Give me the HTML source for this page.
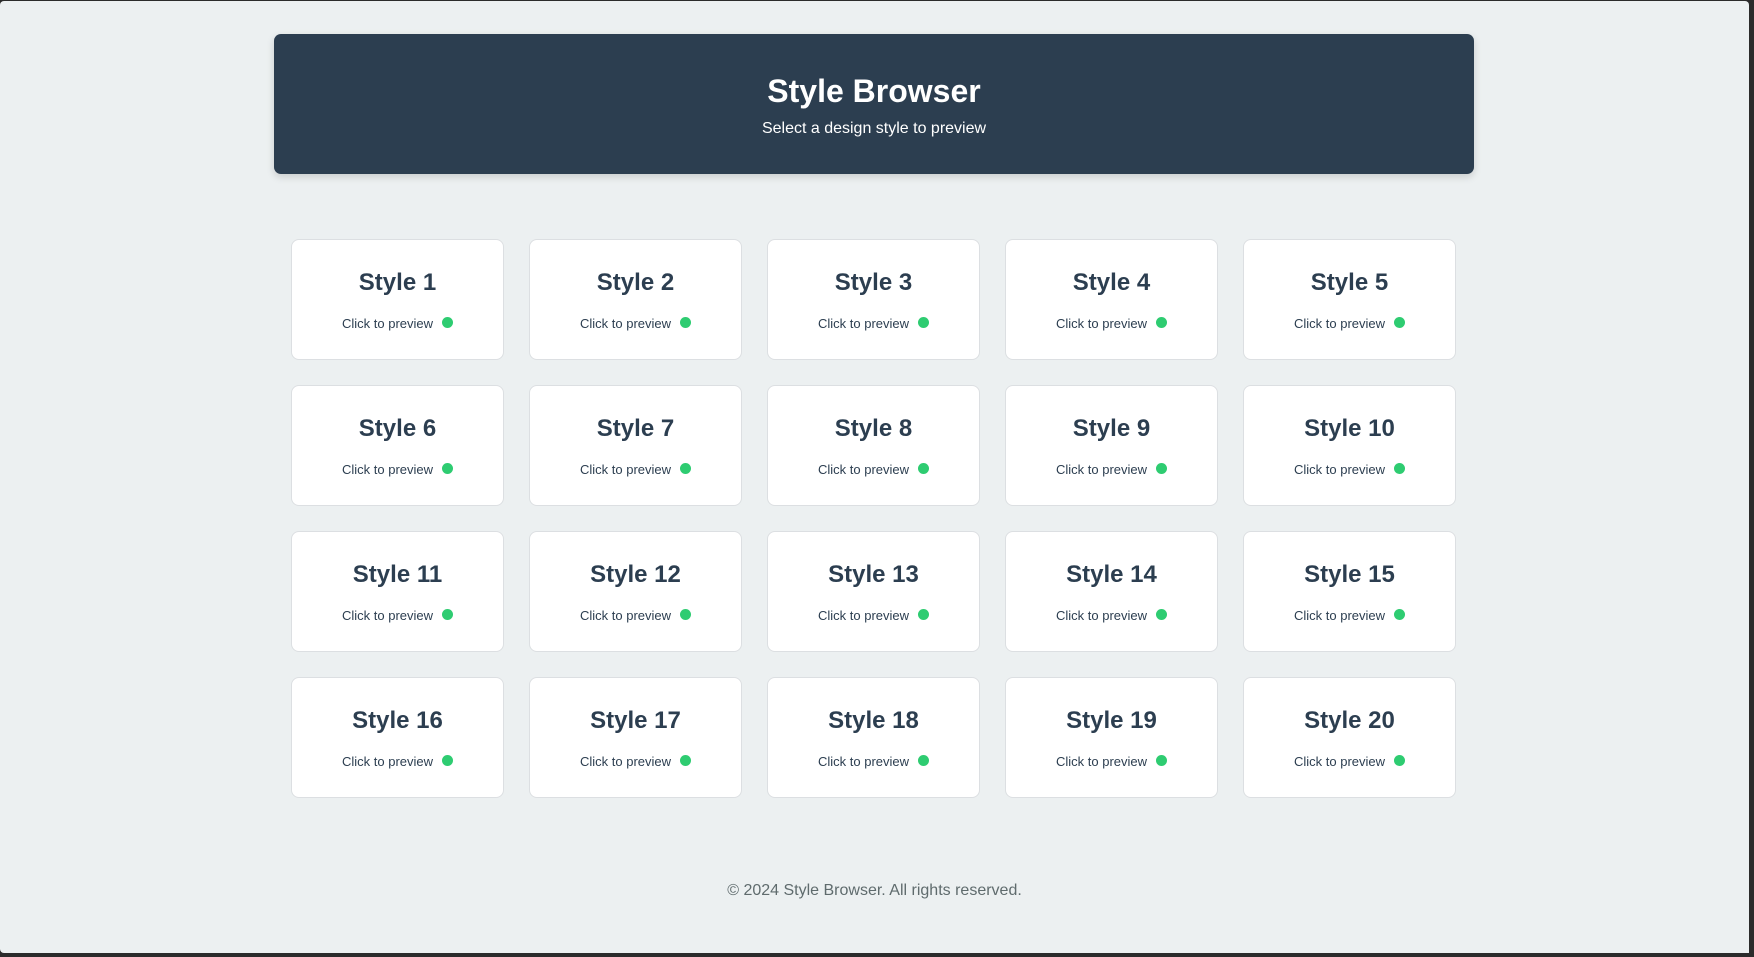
<!DOCTYPE html>
<html><head><meta charset="utf-8"><style>
html,body{margin:0;padding:0;width:1754px;height:957px;overflow:hidden;background:#2b2b2b;font-family:"Liberation Sans",sans-serif;}
.page{position:absolute;left:0;top:1px;width:1749px;height:952px;background:#ecf0f1;border-radius:4px 4px 0 4px;}
.header{position:absolute;left:274px;top:33px;width:1200px;height:140px;background:#2c3e50;border-radius:7px;box-shadow:0 3px 8px rgba(0,0,0,0.15);color:#fff;text-align:center;}
.header h1{margin:0;position:absolute;top:39px;width:100%;font-size:32px;font-weight:bold;}
.header p{margin:0;position:absolute;top:86px;width:100%;font-size:16px;}
.card{position:absolute;width:213px;height:121px;background:#fff;border:1px solid #dcdfe2;border-radius:8px;box-sizing:border-box;text-align:center;color:#2c3e50;}
.card h2{margin:0;position:absolute;top:29px;width:100%;font-size:24px;font-weight:bold;}
.card .s{position:absolute;top:76px;width:100%;font-size:13px;}
.dot{display:inline-block;width:11px;height:11px;border-radius:50%;background:#2ecc71;margin-left:9px;vertical-align:0px;}
.footer{position:absolute;top:881px;width:1749px;text-align:center;font-size:16px;color:#5f6b6d;}
</style></head><body><div class="page">
<div class="header"><h1>Style Browser</h1><p>Select a design style to preview</p></div>
<div class="footer">© 2024 Style Browser. All rights reserved.</div>
</div>
<div class="page" style="background:none;pointer-events:none">
<div class="card" style="left:291px;top:238px"><h2>Style 1</h2><div class="s">Click to preview<span class="dot"></span></div></div>
<div class="card" style="left:529px;top:238px"><h2>Style 2</h2><div class="s">Click to preview<span class="dot"></span></div></div>
<div class="card" style="left:767px;top:238px"><h2>Style 3</h2><div class="s">Click to preview<span class="dot"></span></div></div>
<div class="card" style="left:1005px;top:238px"><h2>Style 4</h2><div class="s">Click to preview<span class="dot"></span></div></div>
<div class="card" style="left:1243px;top:238px"><h2>Style 5</h2><div class="s">Click to preview<span class="dot"></span></div></div>
<div class="card" style="left:291px;top:384px"><h2>Style 6</h2><div class="s">Click to preview<span class="dot"></span></div></div>
<div class="card" style="left:529px;top:384px"><h2>Style 7</h2><div class="s">Click to preview<span class="dot"></span></div></div>
<div class="card" style="left:767px;top:384px"><h2>Style 8</h2><div class="s">Click to preview<span class="dot"></span></div></div>
<div class="card" style="left:1005px;top:384px"><h2>Style 9</h2><div class="s">Click to preview<span class="dot"></span></div></div>
<div class="card" style="left:1243px;top:384px"><h2>Style 10</h2><div class="s">Click to preview<span class="dot"></span></div></div>
<div class="card" style="left:291px;top:530px"><h2>Style 11</h2><div class="s">Click to preview<span class="dot"></span></div></div>
<div class="card" style="left:529px;top:530px"><h2>Style 12</h2><div class="s">Click to preview<span class="dot"></span></div></div>
<div class="card" style="left:767px;top:530px"><h2>Style 13</h2><div class="s">Click to preview<span class="dot"></span></div></div>
<div class="card" style="left:1005px;top:530px"><h2>Style 14</h2><div class="s">Click to preview<span class="dot"></span></div></div>
<div class="card" style="left:1243px;top:530px"><h2>Style 15</h2><div class="s">Click to preview<span class="dot"></span></div></div>
<div class="card" style="left:291px;top:676px"><h2>Style 16</h2><div class="s">Click to preview<span class="dot"></span></div></div>
<div class="card" style="left:529px;top:676px"><h2>Style 17</h2><div class="s">Click to preview<span class="dot"></span></div></div>
<div class="card" style="left:767px;top:676px"><h2>Style 18</h2><div class="s">Click to preview<span class="dot"></span></div></div>
<div class="card" style="left:1005px;top:676px"><h2>Style 19</h2><div class="s">Click to preview<span class="dot"></span></div></div>
<div class="card" style="left:1243px;top:676px"><h2>Style 20</h2><div class="s">Click to preview<span class="dot"></span></div></div>
</div>
</body></html>
